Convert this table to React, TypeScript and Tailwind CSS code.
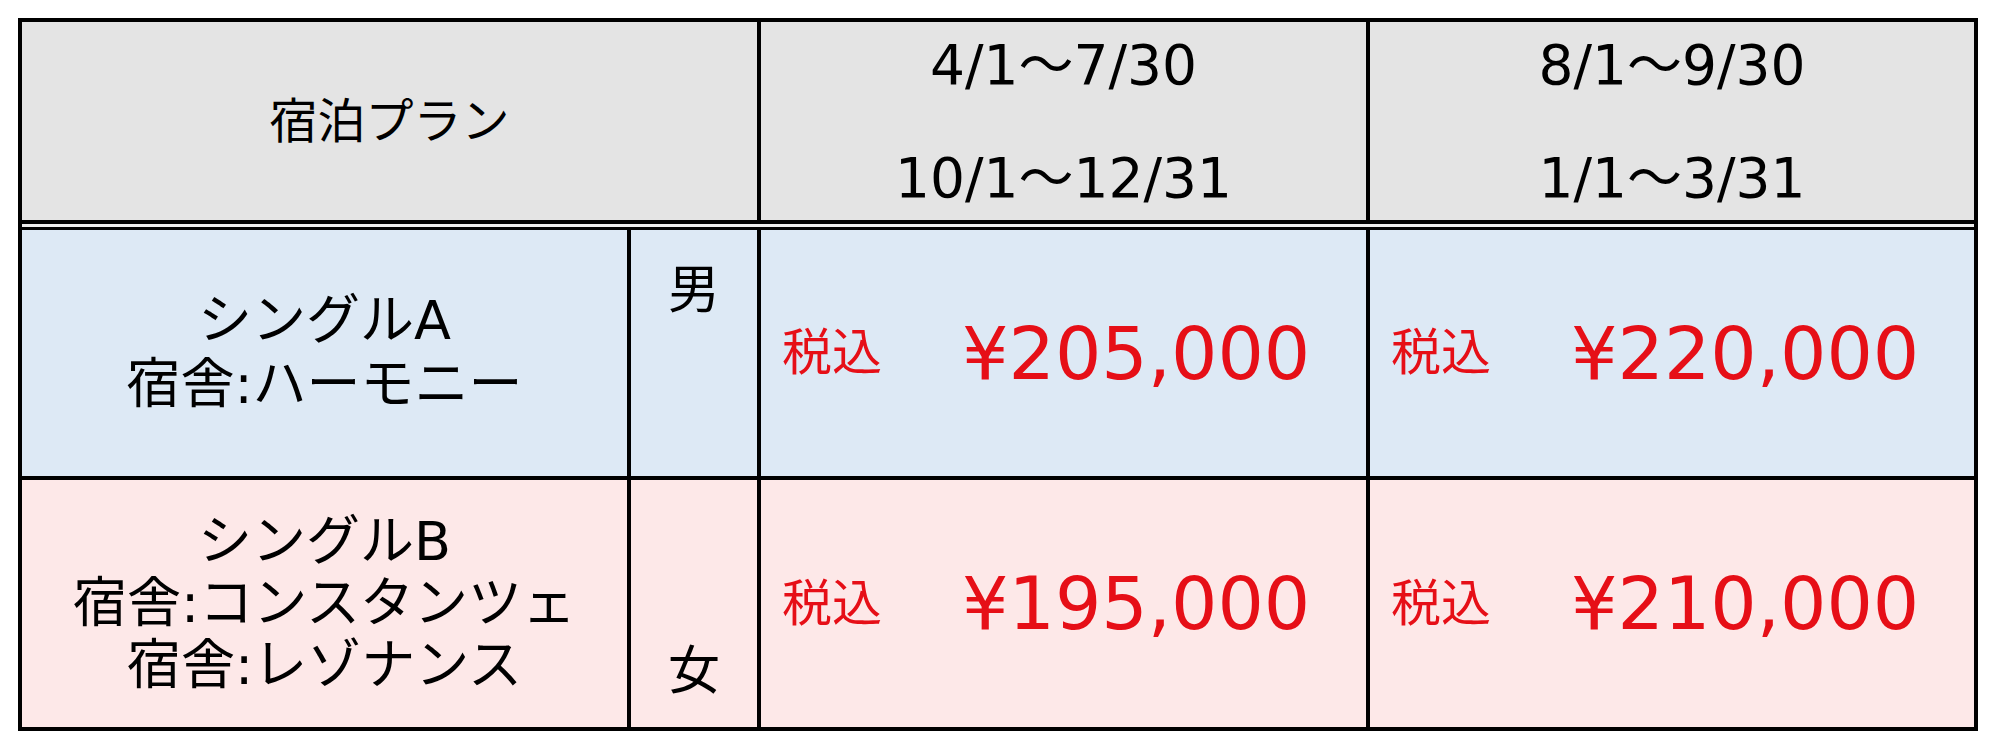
import React from "react";

const font = { fontFamily: '"DejaVu Sans", "Noto Sans CJK JP", sans-serif' };

function PriceCell({ price, last }: { price: string; last?: boolean }) {
  return (
    <div
      className={`flex items-center pl-[21px] ${last ? "w-[604px]" : "w-[609px] border-r-4 border-black"}`}
    >
      <span className="text-[50px] leading-none text-[#e60f17]">税込</span>
      <span className="ml-[80px] text-[73px] leading-none text-[#e60f17]">{price}</span>
    </div>
  );
}

export default function App() {
  return (
    <div className="min-h-[750px] w-[2000px] bg-white pl-[18px] pt-[18px]" style={font}>
      <div className="w-[1960px] border-4 border-black text-black">
        {/* header */}
        <div className="flex h-[198px] bg-[#e4e4e4]">
          <div className="flex w-[739px] items-center justify-center border-r-4 border-black text-[48px] leading-none">
            宿泊プラン
          </div>
          <div className="flex w-[609px] flex-col items-center justify-center gap-[53px] border-r-4 border-black text-[55px] leading-[60px]">
            <div>4/1～7/30</div>
            <div>10/1～12/31</div>
          </div>
          <div className="flex w-[604px] flex-col items-center justify-center gap-[53px] text-[55px] leading-[60px]">
            <div>8/1～9/30</div>
            <div>1/1～3/31</div>
          </div>
        </div>
        {/* double rule */}
        <div className="h-[10px] border-t-4 border-b-[3px] border-black bg-[#ececec]" />
        {/* row 1 */}
        <div className="flex h-[250px] border-b-4 border-black bg-[#dde9f5]">
          <div className="flex w-[609px] flex-col items-center justify-center border-r-4 border-black text-[54px] leading-[64px]">
            <div>シングルA</div>
            <div>宿舎:ハーモニー</div>
          </div>
          <div className="flex w-[130px] justify-center border-r-4 border-black pt-[34px] text-[52px] leading-none">
            男
          </div>
          <PriceCell price="¥205,000" />
          <PriceCell price="¥220,000" last />
        </div>
        {/* row 2 */}
        <div className="flex h-[247px] bg-[#fde8e8]">
          <div className="flex w-[609px] flex-col items-center justify-center border-r-4 border-black text-[54px] leading-[62px]">
            <div>シングルB</div>
            <div>宿舎:コンスタンツェ</div>
            <div>宿舎:レゾナンス</div>
          </div>
          <div className="flex w-[130px] items-end justify-center border-r-4 border-black pb-[30px] text-[52px] leading-none">
            女
          </div>
          <PriceCell price="¥195,000" />
          <PriceCell price="¥210,000" last />
        </div>
      </div>
    </div>
  );
}
